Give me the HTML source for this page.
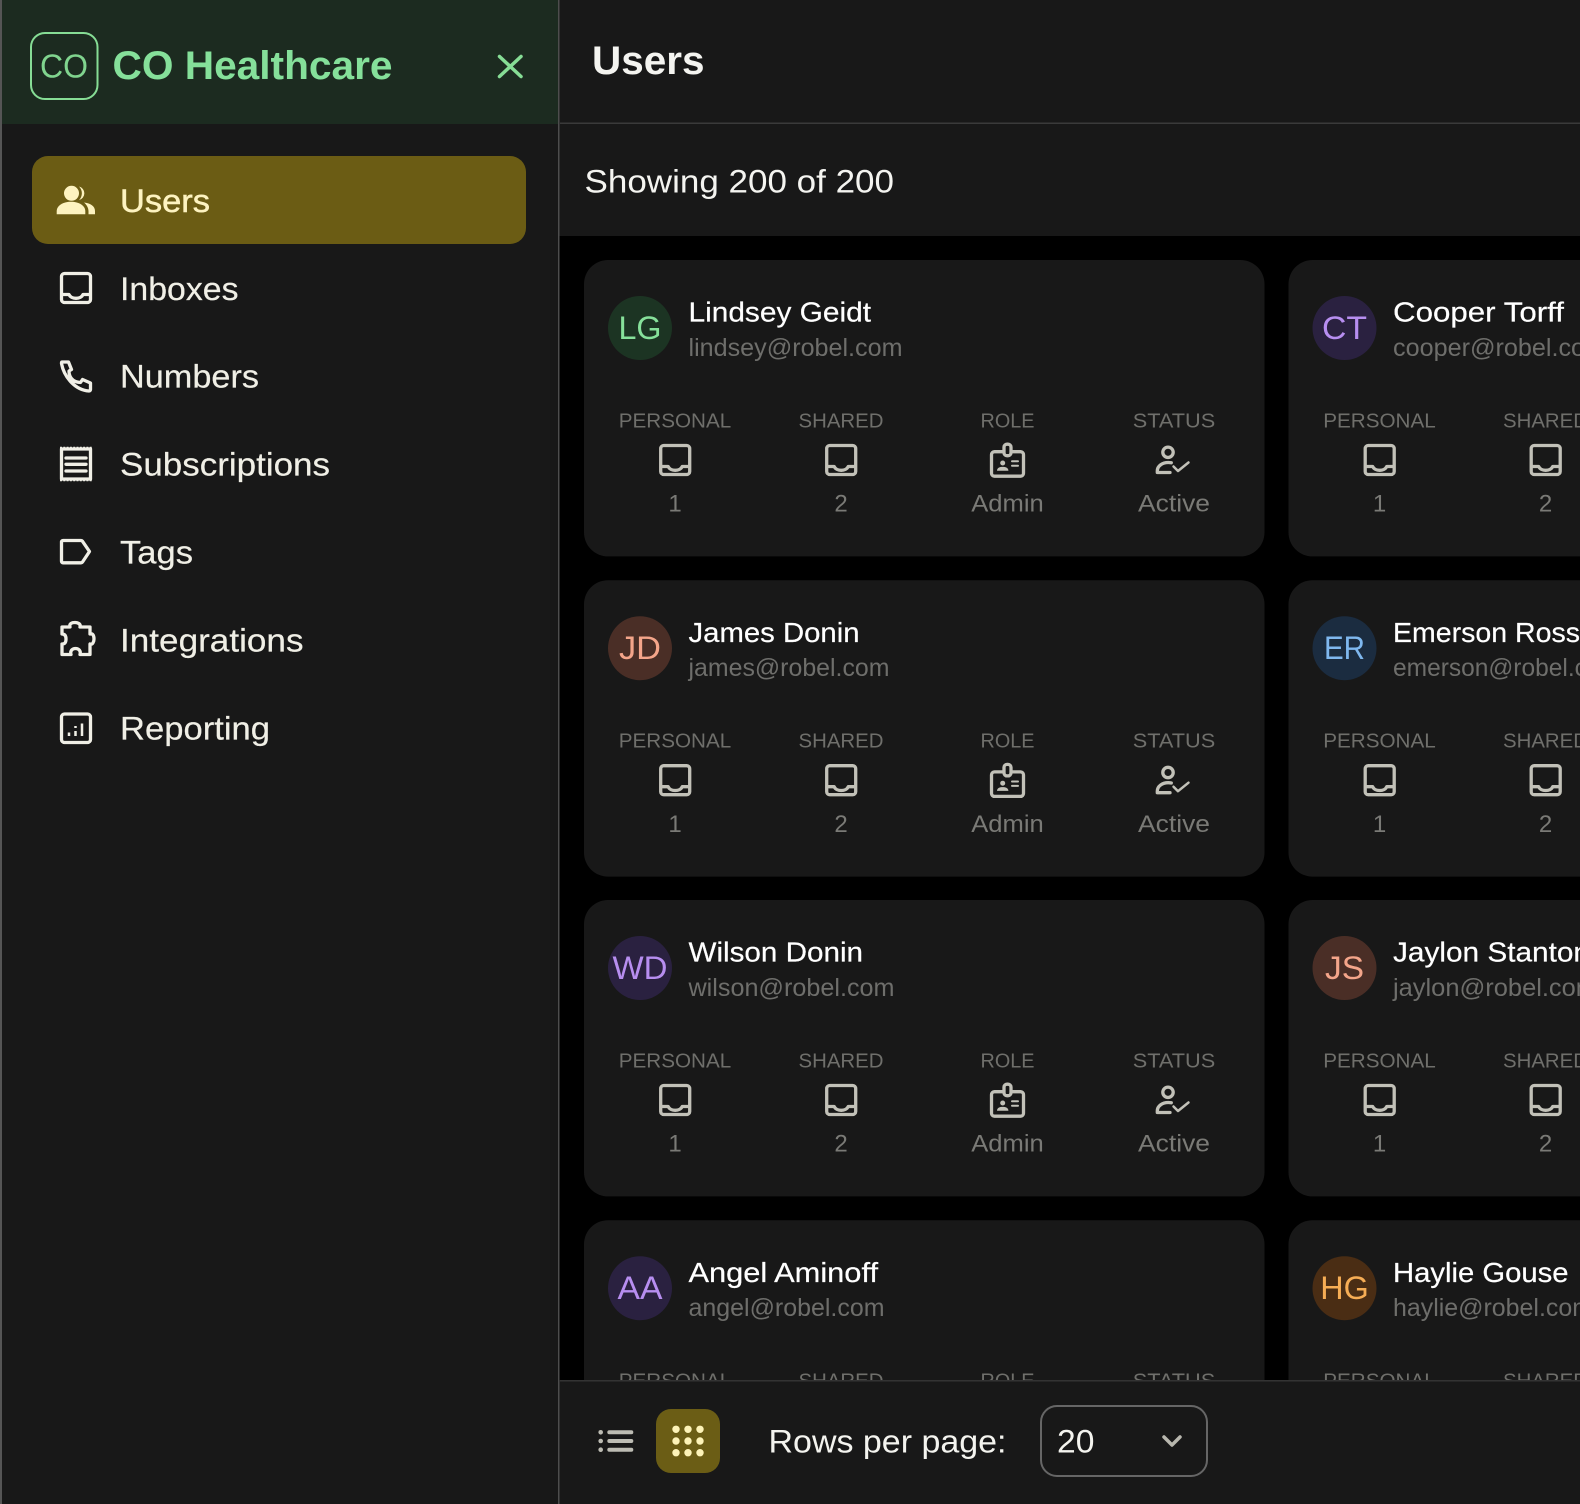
<!DOCTYPE html>
<html lang="en"><head><meta charset="utf-8"><title>Users</title>
<style>
html,body{margin:0;padding:0;background:#000;width:1580px;height:1504px;overflow:hidden}
svg{display:block;font-family:"Liberation Sans",sans-serif}
.nav{font-size:32px;fill:#f0efe6;stroke:#f0efe6;stroke-width:.2}
.name{font-size:28px;fill:#fff;stroke:#fff;stroke-width:.2}
.mail{font-size:25px;fill:#6e6e6b}
.ini{font-size:32px;text-anchor:middle}
.lbl{font-size:20px;fill:#6f6f6b;text-anchor:middle}
.val{font-size:24px;fill:#7a7a76;text-anchor:middle}
.ic{fill:none;stroke:#f0efe6;stroke-width:3.300;stroke-linejoin:round;stroke-linecap:round}
.si{fill:none;stroke:#c2c1b8;stroke-width:3.300;stroke-linejoin:round;stroke-linecap:round}
</style></head><body>
<svg width="1580" height="1504" viewBox="0 0 1580 1504" xmlns="http://www.w3.org/2000/svg">
<defs>
<g id="inb"><rect x="1.5" y="1.5" width="29" height="29" rx="3"/><path d="M2 22.5h7c1 2.4 3.8 3.800 7 3.800s6-1.400 7-3.800h7"/></g>
<g id="role"><rect x="1.500" y="9" width="32" height="24.500" rx="3"/><rect x="14" y="1.500" width="7" height="11.500" rx="3" fill="#181818"/><circle cx="12.700" cy="20.300" r="2.500" fill="#c2c1b8" stroke="none"/><path d="M7 28c0-3 3-3.800 5.700-3.800s5.700.8 5.700 3.800z" fill="#c2c1b8" stroke="none"/><path d="M22 18.600h6M22 23h6" stroke-width="2"/></g>
<g id="stat"><circle cx="14" cy="6.300" r="5.200"/><path d="M16 26.500H3.300V25c0-5 5-8.500 11-8.500 1 0 2 .1 3 .3"/><path d="M19.500 20.500l4.500 4.500 10.500-8.500" stroke-width="2.500"/></g>
</defs>

<rect width="1580" height="1504" fill="#000"/>
<!-- main header -->
<rect x="558" y="0" width="1022" height="236" fill="#181818"/>
<rect x="560" y="122.500" width="1020" height="1.500" fill="#3a3a3a"/>
<text x="592" y="74" font-size="40" font-weight="700" fill="#f4f4f0" textLength="112.500" lengthAdjust="spacingAndGlyphs">Users</text>
<text x="584.500" y="192.500" font-size="32" fill="#f4f4f0" textLength="309.500" lengthAdjust="spacingAndGlyphs">Showing 200 of 200</text>

<!-- COLUMN 1 -->
<g transform="translate(584.500,260)">
<rect x="-.5" width="680.500" height="296.400" rx="24" fill="#181818"/>
<circle cx="55.500" cy="68" r="32" fill="#1c3423"/>
<text class="ini" x="55.500" y="79" fill="#86e09a" textLength="43" lengthAdjust="spacingAndGlyphs">LG</text>
<text class="name" x="104" y="61.700" textLength="182.500" lengthAdjust="spacingAndGlyphs">Lindsey Geidt</text>
<text class="mail" x="104" y="96" textLength="214" lengthAdjust="spacingAndGlyphs">lindsey@robel.com</text>
<text class="lbl" x="90.500" y="167.500" textLength="112.500" lengthAdjust="spacingAndGlyphs">PERSONAL</text>
<text class="lbl" x="256.500" y="167.500" textLength="85" lengthAdjust="spacingAndGlyphs">SHARED</text>
<text class="lbl" x="423" y="167.500" textLength="54" lengthAdjust="spacingAndGlyphs">ROLE</text>
<text class="lbl" x="589.500" y="167.500" textLength="82.500" lengthAdjust="spacingAndGlyphs">STATUS</text>
<use class="si" href="#inb" x="74.700" y="184"/><use class="si" href="#inb" x="240.700" y="184"/><use class="si" href="#role" x="405.500" y="182.700"/><use class="si" href="#stat" x="569.500" y="186"/>
<text class="val" x="90.500" y="251.700">1</text><text class="val" x="256.500" y="251.700">2</text>
<text class="val" x="423" y="251.700" textLength="72.500" lengthAdjust="spacingAndGlyphs">Admin</text>
<text class="val" x="589.500" y="251.700" textLength="72" lengthAdjust="spacingAndGlyphs">Active</text>
</g>
<g transform="translate(584.500,580.200)">
<rect x="-.5" width="680.500" height="296.400" rx="24" fill="#181818"/>
<circle cx="55.500" cy="68" r="32" fill="#4a2e26"/>
<text class="ini" x="55.500" y="79" fill="#f4a58a" textLength="42" lengthAdjust="spacingAndGlyphs">JD</text>
<text class="name" x="104" y="61.700" textLength="171" lengthAdjust="spacingAndGlyphs">James Donin</text>
<text class="mail" x="104" y="96" textLength="201" lengthAdjust="spacingAndGlyphs">james@robel.com</text>
<text class="lbl" x="90.500" y="167.500" textLength="112.500" lengthAdjust="spacingAndGlyphs">PERSONAL</text>
<text class="lbl" x="256.500" y="167.500" textLength="85" lengthAdjust="spacingAndGlyphs">SHARED</text>
<text class="lbl" x="423" y="167.500" textLength="54" lengthAdjust="spacingAndGlyphs">ROLE</text>
<text class="lbl" x="589.500" y="167.500" textLength="82.500" lengthAdjust="spacingAndGlyphs">STATUS</text>
<use class="si" href="#inb" x="74.700" y="184"/><use class="si" href="#inb" x="240.700" y="184"/><use class="si" href="#role" x="405.500" y="182.700"/><use class="si" href="#stat" x="569.500" y="186"/>
<text class="val" x="90.500" y="251.700">1</text><text class="val" x="256.500" y="251.700">2</text>
<text class="val" x="423" y="251.700" textLength="72.500" lengthAdjust="spacingAndGlyphs">Admin</text>
<text class="val" x="589.500" y="251.700" textLength="72" lengthAdjust="spacingAndGlyphs">Active</text>
</g>
<g transform="translate(584.500,900)">
<rect x="-.5" width="680.500" height="296.400" rx="24" fill="#181818"/>
<circle cx="55.500" cy="68" r="32" fill="#2a2140"/>
<text class="ini" x="55.500" y="79" fill="#b78ef0" textLength="55" lengthAdjust="spacingAndGlyphs">WD</text>
<text class="name" x="104" y="61.700" textLength="174.500" lengthAdjust="spacingAndGlyphs">Wilson Donin</text>
<text class="mail" x="104" y="96" textLength="206" lengthAdjust="spacingAndGlyphs">wilson@robel.com</text>
<text class="lbl" x="90.500" y="167.500" textLength="112.500" lengthAdjust="spacingAndGlyphs">PERSONAL</text>
<text class="lbl" x="256.500" y="167.500" textLength="85" lengthAdjust="spacingAndGlyphs">SHARED</text>
<text class="lbl" x="423" y="167.500" textLength="54" lengthAdjust="spacingAndGlyphs">ROLE</text>
<text class="lbl" x="589.500" y="167.500" textLength="82.500" lengthAdjust="spacingAndGlyphs">STATUS</text>
<use class="si" href="#inb" x="74.700" y="184"/><use class="si" href="#inb" x="240.700" y="184"/><use class="si" href="#role" x="405.500" y="182.700"/><use class="si" href="#stat" x="569.500" y="186"/>
<text class="val" x="90.500" y="251.700">1</text><text class="val" x="256.500" y="251.700">2</text>
<text class="val" x="423" y="251.700" textLength="72.500" lengthAdjust="spacingAndGlyphs">Admin</text>
<text class="val" x="589.500" y="251.700" textLength="72" lengthAdjust="spacingAndGlyphs">Active</text>
</g>
<g transform="translate(584.500,1220.200)">
<rect x="-.5" width="680.500" height="296.400" rx="24" fill="#181818"/>
<circle cx="55.500" cy="68" r="32" fill="#2a2140"/>
<text class="ini" x="55.500" y="79" fill="#b78ef0" textLength="45" lengthAdjust="spacingAndGlyphs">AA</text>
<text class="name" x="104" y="61.700" textLength="189.500" lengthAdjust="spacingAndGlyphs">Angel Aminoff</text>
<text class="mail" x="104" y="96" textLength="196" lengthAdjust="spacingAndGlyphs">angel@robel.com</text>
<text class="lbl" x="90.500" y="167.500" textLength="112.500" lengthAdjust="spacingAndGlyphs">PERSONAL</text>
<text class="lbl" x="256.500" y="167.500" textLength="85" lengthAdjust="spacingAndGlyphs">SHARED</text>
<text class="lbl" x="423" y="167.500" textLength="54" lengthAdjust="spacingAndGlyphs">ROLE</text>
<text class="lbl" x="589.500" y="167.500" textLength="82.500" lengthAdjust="spacingAndGlyphs">STATUS</text>
</g>

<!-- COLUMN 2 -->
<g transform="translate(1289,260)">
<rect x="-.5" width="680.500" height="296.400" rx="24" fill="#181818"/>
<circle cx="55.500" cy="68" r="32" fill="#2a2140"/>
<text class="ini" x="55.500" y="79" fill="#b78ef0" textLength="45" lengthAdjust="spacingAndGlyphs">CT</text>
<text class="name" x="104" y="61.700" textLength="171" lengthAdjust="spacingAndGlyphs">Cooper Torff</text>
<text class="mail" x="104" y="96" textLength="213" lengthAdjust="spacingAndGlyphs">cooper@robel.com</text>
<text class="lbl" x="90.500" y="167.500" textLength="112.500" lengthAdjust="spacingAndGlyphs">PERSONAL</text>
<text class="lbl" x="256.500" y="167.500" textLength="85" lengthAdjust="spacingAndGlyphs">SHARED</text>
<use class="si" href="#inb" x="74.700" y="184"/><use class="si" href="#inb" x="240.700" y="184"/>
<text class="val" x="90.500" y="251.700">1</text><text class="val" x="256.500" y="251.700">2</text>
</g>
<g transform="translate(1289,580.200)">
<rect x="-.5" width="680.500" height="296.400" rx="24" fill="#181818"/>
<circle cx="55.500" cy="68" r="32" fill="#1b2c40"/>
<text class="ini" x="55.500" y="79" fill="#7fb8ef" textLength="41" lengthAdjust="spacingAndGlyphs">ER</text>
<text class="name" x="104" y="61.700" textLength="187" lengthAdjust="spacingAndGlyphs">Emerson Ross</text>
<text class="mail" x="104" y="96" textLength="228" lengthAdjust="spacingAndGlyphs">emerson@robel.com</text>
<text class="lbl" x="90.500" y="167.500" textLength="112.500" lengthAdjust="spacingAndGlyphs">PERSONAL</text>
<text class="lbl" x="256.500" y="167.500" textLength="85" lengthAdjust="spacingAndGlyphs">SHARED</text>
<use class="si" href="#inb" x="74.700" y="184"/><use class="si" href="#inb" x="240.700" y="184"/>
<text class="val" x="90.500" y="251.700">1</text><text class="val" x="256.500" y="251.700">2</text>
</g>
<g transform="translate(1289,900)">
<rect x="-.5" width="680.500" height="296.400" rx="24" fill="#181818"/>
<circle cx="55.500" cy="68" r="32" fill="#4a2e26"/>
<text class="ini" x="55.500" y="79" fill="#f4a58a" textLength="39" lengthAdjust="spacingAndGlyphs">JS</text>
<text class="name" x="104" y="61.700" textLength="197" lengthAdjust="spacingAndGlyphs">Jaylon Stanton</text>
<text class="mail" x="104" y="96" textLength="204" lengthAdjust="spacingAndGlyphs">jaylon@robel.com</text>
<text class="lbl" x="90.500" y="167.500" textLength="112.500" lengthAdjust="spacingAndGlyphs">PERSONAL</text>
<text class="lbl" x="256.500" y="167.500" textLength="85" lengthAdjust="spacingAndGlyphs">SHARED</text>
<use class="si" href="#inb" x="74.700" y="184"/><use class="si" href="#inb" x="240.700" y="184"/>
<text class="val" x="90.500" y="251.700">1</text><text class="val" x="256.500" y="251.700">2</text>
</g>
<g transform="translate(1289,1220.200)">
<rect x="-.5" width="680.500" height="296.400" rx="24" fill="#181818"/>
<circle cx="55.500" cy="68" r="32" fill="#4a2d14"/>
<text class="ini" x="55.500" y="79" fill="#f6ad55" textLength="48.500" lengthAdjust="spacingAndGlyphs">HG</text>
<text class="name" x="104" y="61.700" textLength="175.500" lengthAdjust="spacingAndGlyphs">Haylie Gouse</text>
<text class="mail" x="104" y="96" textLength="200" lengthAdjust="spacingAndGlyphs">haylie@robel.com</text>
<text class="lbl" x="90.500" y="167.500" textLength="112.500" lengthAdjust="spacingAndGlyphs">PERSONAL</text>
<text class="lbl" x="256.500" y="167.500" textLength="85" lengthAdjust="spacingAndGlyphs">SHARED</text>
</g>

<!-- footer -->
<rect x="558" y="1380" width="1022" height="124" fill="#181818"/>
<rect x="560" y="1380" width="1020" height="1.500" fill="#333"/>
<g fill="#bdbcb3"><circle cx="600.700" cy="1432.300" r="2.300"/><circle cx="600.700" cy="1441" r="2.300"/><circle cx="600.700" cy="1449.700" r="2.300"/>
<rect x="607.300" y="1430.300" width="26" height="4" rx="2"/><rect x="607.300" y="1439" width="26" height="4" rx="2"/><rect x="607.300" y="1447.700" width="26" height="4" rx="2"/></g>
<rect x="656" y="1409" width="64" height="64" rx="15" fill="#6b5d15"/>
<g fill="#fdf3b8"><circle cx="676" cy="1429.300" r="3.700"/><circle cx="688" cy="1429.300" r="3.700"/><circle cx="700" cy="1429.300" r="3.700"/><circle cx="676" cy="1441" r="3.700"/><circle cx="688" cy="1441" r="3.700"/><circle cx="700" cy="1441" r="3.700"/><circle cx="676" cy="1452.700" r="3.700"/><circle cx="688" cy="1452.700" r="3.700"/><circle cx="700" cy="1452.700" r="3.700"/></g>
<text x="768.500" y="1452.700" font-size="32" fill="#f4f4ef" textLength="238" lengthAdjust="spacingAndGlyphs">Rows per page:</text>
<rect x="1041" y="1406" width="166" height="70" rx="16" fill="none" stroke="#666" stroke-width="2"/>
<text x="1057" y="1452.700" font-size="32" fill="#f4f4ef" textLength="37.400" lengthAdjust="spacingAndGlyphs">20</text>
<path d="M1164 1437l8 8 8-8" fill="none" stroke="#b8b7ae" stroke-width="3.500" stroke-linecap="round" stroke-linejoin="round"/>

<!-- sidebar -->
<rect x="0" y="0" width="558.500" height="1504" fill="#181818"/>
<rect x="0" y="0" width="2" height="1504" fill="#555"/>
<rect x="558" y="0" width="1.500" height="1504" fill="#4d4d4d"/>
<rect x="2" y="0" width="556" height="124" fill="#1c2b20"/>
<rect x="31" y="33" width="66.500" height="66" rx="14" fill="none" stroke="#86dd95" stroke-width="2"/>
<text x="40" y="77.300" font-size="33" fill="#86dd95" fill-opacity=".95" textLength="48" lengthAdjust="spacingAndGlyphs">CO</text>
<text x="112.500" y="79" font-size="40" font-weight="700" fill="#85e09a" textLength="280" lengthAdjust="spacingAndGlyphs">CO Healthcare</text>
<path d="M499.500 56.500l21.500 20M521 56.500l-21.500 20" fill="none" stroke="#86dd95" stroke-width="3.500" stroke-linecap="round"/>

<rect x="32" y="156" width="494" height="88" rx="16" fill="#6b5c14"/>
<g fill="#fdf3c0"><circle cx="71.500" cy="193.300" r="7.500"/><path d="M56.700 214.300v-3c0-6 7-9.500 14.300-9.500s14.300 3.500 14.300 9.500v3z"/><path d="M79 186.500a7 7 0 0 1 0 13.600a9.500 9.500 0 0 0 0-13.600z"/><path d="M84 202.500c6 .7 11 3.500 11 8.500v3.300h-6.500v-3c0-3.500-1.800-6.500-4.500-8.800z"/></g>
<text x="120" y="212" font-size="32" fill="#fdf3c0" stroke="#fdf3c0" stroke-width=".5" textLength="90" lengthAdjust="spacingAndGlyphs">Users</text>

<use class="ic" href="#inb" x="60" y="272"/>
<text class="nav" x="120" y="300" textLength="118.500" lengthAdjust="spacingAndGlyphs">Inboxes</text>

<path class="ic" transform="translate(60,360)" d="M2 2h6.500l3 7.500-2.500 1.500C9 16 11.500 22 20.500 22.500l2-3 8 3.500v6.500c0 .8-.5 1.500-1.500 1.500C15 30 4 17 1.500 3.500c0-.8 0-1.500.5-1.500z"/>
<text class="nav" x="120" y="387.500" textLength="139" lengthAdjust="spacingAndGlyphs">Numbers</text>

<g class="ic"><rect x="61.500" y="449" width="29" height="30"/><path d="M66 458h20M66 464.300h20M66 471h20"/></g>
<path d="M60 447.800H92M60 480.300H92" fill="none" stroke="#f0efe6" stroke-width="2" stroke-dasharray="2 1.300"/>
<text class="nav" x="120" y="475.500" textLength="210" lengthAdjust="spacingAndGlyphs">Subscriptions</text>

<path class="ic" d="M63 540.500H81a2 2 0 0 1 1.500.8L89.500 551.500l-7 10.500a2 2 0 0 1-1.500.8H63a1.500 1.500 0 0 1-1.500-1.500V542a1.500 1.500 0 0 1 1.500-1.500z"/>
<text class="nav" x="120" y="563.500" textLength="73" lengthAdjust="spacingAndGlyphs">Tags</text>

<path class="ic" d="M62 627L70 627C69 623.500 72 622.500 75 622.500C78 622.500 81 624 80 627L90 627L90 634C93 633 94 636 94 639C94 642 92.500 645 90 644L90 654.500L80 654.500C81 651 79 648.500 75.500 648.500C72 648.500 70 651 71 654.500L62 654.500L62 644C65.500 644 66 641.500 66 639C66 636 65 634 62 634Z"/>
<text class="nav" x="120" y="651.500" textLength="183.500" lengthAdjust="spacingAndGlyphs">Integrations</text>

<rect class="ic" x="61.500" y="714" width="29" height="28.500" rx="3"/>
<path d="M69 732.500v3.500M75.500 726v2M75.500 731v5M82 723.500v12.500" fill="none" stroke="#f0efe6" stroke-width="2.500"/>
<text class="nav" x="120" y="739.500" textLength="150" lengthAdjust="spacingAndGlyphs">Reporting</text>
</svg>
</body></html>
